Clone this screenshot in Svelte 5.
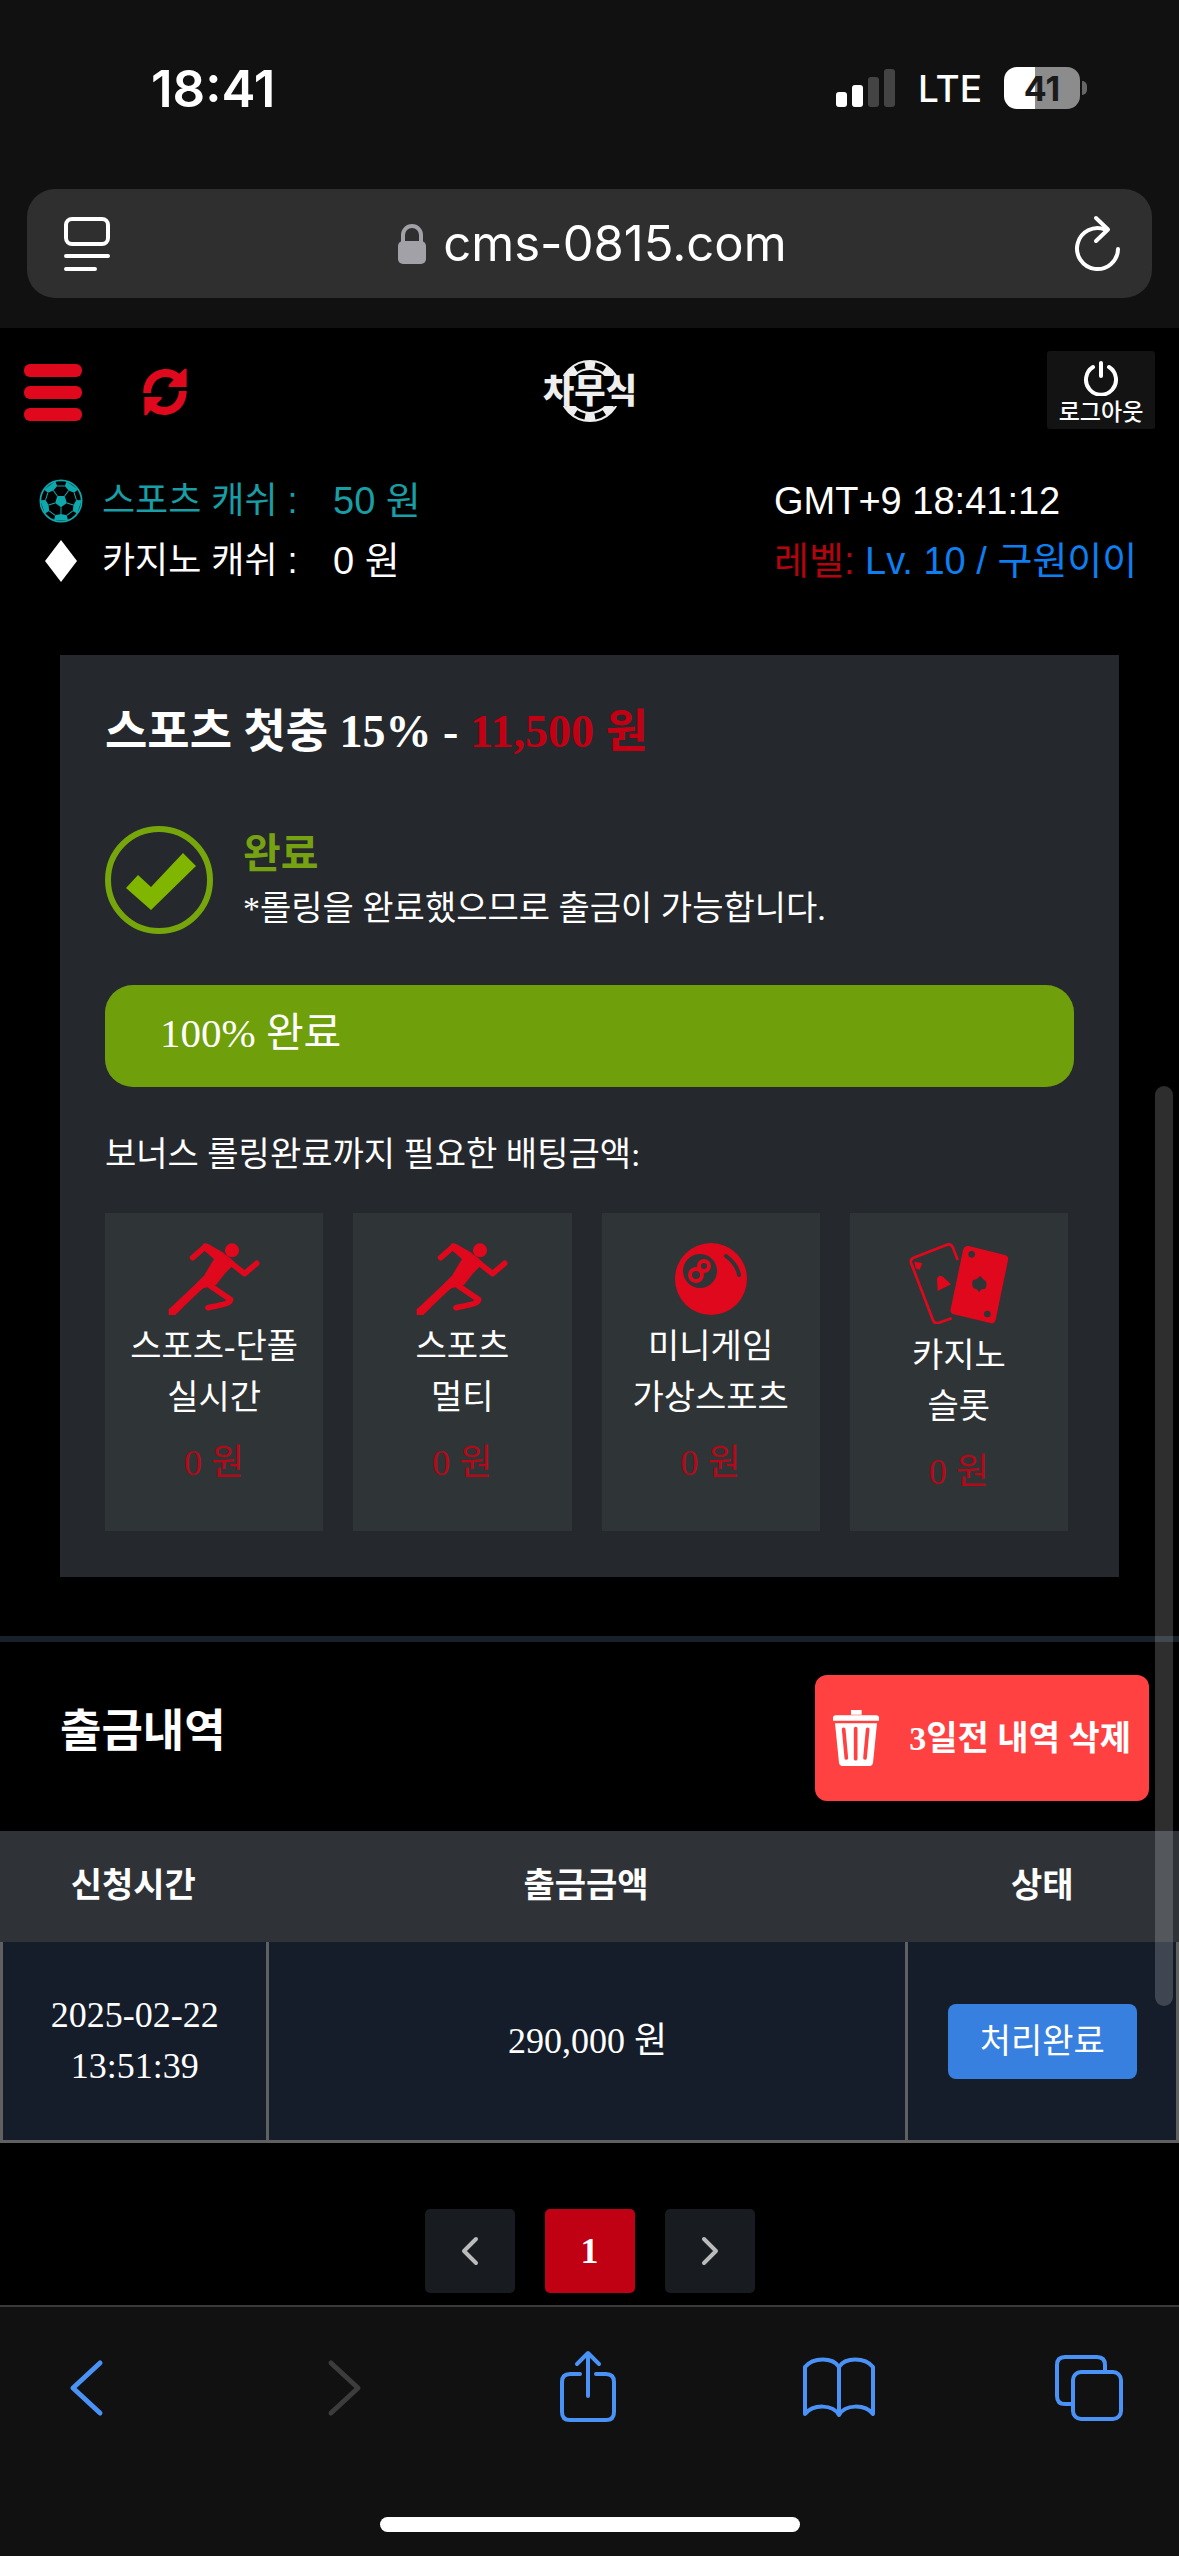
<script>
  const games = [
    { icon: 'runner', lines: ['스포츠-단폴', '실시간'], amount: '0 원' },
    { icon: 'runner', lines: ['스포츠', '멀티'], amount: '0 원' },
    { icon: 'ball', lines: ['미니게임', '가상스포츠'], amount: '0 원' },
    { icon: 'cards', lines: ['카지노', '슬롯'], amount: '0 원' }
  ];
  const withdrawals = [
    { date: '2025-02-22', time: '13:51:39', amount: '290,000 원', state: '처리완료' }
  ];
  const progress = 100;

  // Soccer ball geometry: a point at a radius and angle from the ball's centre.
  const at = (r, deg) => {
    const a = (deg * Math.PI) / 180;
    return `${(64 + r * Math.cos(a)).toFixed(1)} ${(64 + r * Math.sin(a)).toFixed(1)}`;
  };
  const dirs = [-54, 18, 90, 162, 234];
  const centre = 'M' + dirs.map((d) => at(18, d)).join('L') + 'Z';
  const patches = dirs
    .map((d) => `M${at(38, d)}L${at(45, d + 22)}L${at(60, d + 20)}L${at(60, d - 20)}L${at(45, d - 22)}Z`)
    .join('');
  const seams = dirs
    .map((d) => `M${at(18, d)}L${at(38, d)}M${at(45, d + 22)}L${at(45, d + 50)}`)
    .join('');
</script>

<div class="screen">
  <header class="browser-top">
    <div class="status-bar">
      <span class="clock">18:41</span>
      <div class="signals">
        <svg width="60" height="38" viewBox="0 0 60 38" aria-hidden="true">
          <rect x="0" y="23" width="11" height="15" rx="3" fill="#fff" />
          <rect x="16" y="16" width="11" height="22" rx="3" fill="#fff" />
          <rect x="32" y="8" width="11" height="30" rx="3" fill="#444" />
          <rect x="48" y="0" width="11" height="38" rx="3" fill="#444" />
        </svg>
        <span class="network">LTE</span>
        <div class="battery"><span>41</span></div>
      </div>
    </div>
    <div class="address-bar">
      <button class="plain" aria-label="페이지 설정">
        <svg width="48" height="58" viewBox="0 0 48 58" fill="none" stroke="#fff" stroke-width="4" stroke-linecap="round">
          <rect x="3" y="4" width="42" height="25" rx="6" />
          <path d="M3 41H45M3 54H32" />
        </svg>
      </button>
      <button class="plain url">
        <svg width="28" height="40" viewBox="0 0 28 40" aria-hidden="true">
          <path d="M5 18V11a9 9 0 0 1 18 0V18" fill="none" stroke="#a2a1a8" stroke-width="4" />
          <rect x="0" y="17" width="28" height="23" rx="5" fill="#a2a1a8" />
        </svg>
        <span>cms-0815.com</span>
      </button>
      <button class="plain" aria-label="새로고침">
        <svg width="48" height="58" viewBox="0 0 48 58" fill="none" stroke="#fff" stroke-width="4" stroke-linecap="round" stroke-linejoin="round">
          <path d="M44 34A20.500 20.500 0 1 1 31 14.500" />
          <path d="M22 3L34 14.500L22 26" />
        </svg>
      </button>
    </div>
  </header>

  <main>
    <div class="app-bar">
      <div class="left-tools">
        <button class="plain menu" aria-label="메뉴"><i></i><i></i><i></i></button>
        <button class="plain" aria-label="갱신">
          <svg width="46" height="48" viewBox="0 0 138 144" fill="#e0081c">
            <path d="M4 75C4 30 35 3 72 3C88 3 101 8 112 17L128 2H134V57H80V51L95 35C88 29 80 27 71 27C46 27 29 46 27 75Z" />
            <path d="M134 69C134 114 103 141 66 141C50 141 37 136 26 127L14 142H7V87H59V93L43 109C50 115 58 117 67 117C92 117 109 98 111 69Z" />
          </svg>
        </button>
      </div>
      <svg class="logo" width="104" height="66" viewBox="0 0 104 66" role="img" aria-label="차무식">
        <circle cx="52" cy="34" r="30" fill="none" stroke="#eee" stroke-width="2" />
        <circle cx="52" cy="34" r="22" fill="none" stroke="#eee" stroke-width="2" />
        <circle cx="52" cy="34" r="26" fill="none" stroke="#eee" stroke-width="8" pathLength="80" stroke-dasharray="5 5" stroke-dashoffset="2.500" />
        <rect x="0" y="19" width="104" height="30" fill="#000" />
        <text x="52" y="46" text-anchor="middle">차무식</text>
      </svg>
      <button class="logout">
        <svg width="36" height="36" viewBox="0 0 36 36" fill="none" stroke="#fff" stroke-width="4" stroke-linecap="round" aria-hidden="true">
          <path d="M10 7A15 15 0 1 0 26 7" />
          <path d="M18 3V16" />
        </svg>
        <span>로그아웃</span>
      </button>
    </div>

    <section class="account">
      <dl>
        <div class="cash sports">
          <svg width="44" height="44" viewBox="0 0 128 128" aria-hidden="true">
            <circle cx="64" cy="64" r="60" fill="none" stroke="#0fa9ad" stroke-width="5" />
            <path d={centre + patches} fill="#0fa9ad" />
            <path d={seams} stroke="#0fa9ad" stroke-width="3" fill="none" />
          </svg>
          <dt>스포츠 캐쉬 :</dt>
          <dd>50 원</dd>
        </div>
        <div class="cash">
          <svg width="44" height="44" viewBox="0 0 44 44" aria-hidden="true"><path d="M22 1L38 22L22 43L6 22Z" fill="#fff" /></svg>
          <dt>카지노 캐쉬 :</dt>
          <dd>0 원</dd>
        </div>
      </dl>
      <div class="member">
        <p>GMT+9 18:41:12</p>
        <p><span class="level">레벨:</span> <span class="name">Lv. 10 / 구원이이</span></p>
      </div>
    </section>

    <section class="bonus">
      <h2>스포츠 첫충 15% - <em>11,500 원</em></h2>
      <div class="result">
        <svg width="108" height="108" viewBox="0 0 108 108" aria-hidden="true">
          <circle cx="54" cy="54" r="51" fill="none" stroke="#76a60b" stroke-width="6" />
          <path d="M21 62L33 49L46 61L78 27L91 40L46 84Z" fill="#80b600" />
        </svg>
        <div>
          <h3>완료</h3>
          <p>*롤링을 완료했으므로 출금이 가능합니다.</p>
        </div>
      </div>
      <div class="progress" role="progressbar" aria-label="롤링" aria-valuenow={progress} aria-valuemin="0" aria-valuemax="100">
        <div class="fill" style="width: {progress}%">{progress}% 완료</div>
      </div>
      <p class="need">보너스 롤링완료까지 필요한 배팅금액:</p>
      <ul class="games">
        {#each games as game}
          <li>
            {#if game.icon === 'runner'}
              <svg width="92" height="72" viewBox="234 338 276 216" aria-hidden="true">
                <g fill="#e0081c">
                  <circle cx="426" cy="360" r="21" />
                  <path d="M338 341C344 337 350 339 356 342L398 366C408 376 424 384 436 398L406 428L378 464L340 474C326 486 290 520 256 554H236V537C268 508 310 468 342 436L372 386L344 362Z" />
                </g>
                <g fill="none" stroke="#e0081c" stroke-width="17" stroke-linecap="round" stroke-linejoin="round">
                  <path d="M308 382L345 350" />
                  <path d="M420 396L464 430L500 399" />
                  <path d="M360 466L422 508C418 522 390 524 354 532" />
                </g>
              </svg>
            {:else if game.icon === 'ball'}
              <svg width="72" height="72" viewBox="0 0 72 72" aria-hidden="true">
                <circle cx="36" cy="36" r="36" fill="#e0081c" />
                <circle cx="25" cy="28" r="17" fill="#2f3437" />
                <g fill="none" stroke="#e0081c" stroke-width="4">
                  <circle cx="29" cy="23" r="5" />
                  <circle cx="21" cy="32" r="6" />
                </g>
                <path d="M51 13Q62 21 64 32" fill="none" stroke="#2f3437" stroke-width="4" stroke-linecap="round" />
              </svg>
            {:else}
              <svg width="100" height="81" viewBox="26 54 300 243" aria-hidden="true">
                <path d="M172 105L157 66Q150 54 138 60L40 98Q28 103 33 116L98 286Q104 298 116 293L154 280" fill="none" stroke="#e0081c" stroke-width="8" />
                <path d="M42 110L66 114L58 134L46 130Z" fill="#e0081c" />
                <path d="M110 160Q116 148 126 154L152 178L112 198Z" fill="#e0081c" />
                <path d="M205 63L314 90Q326 94 323 106L286 284Q282 298 270 294L160 268Q148 264 151 252L188 76Q192 61 205 63Z" fill="#e0081c" />
                <g fill="#2f3437">
                  <path d="M240 153Q246 162 256 168Q262 180 254 192Q242 190 236 202Q232 192 220 190Q212 178 218 166Q232 162 240 153Z" />
                  <circle cx="214" cy="88" r="10" />
                  <circle cx="261" cy="267" r="10" />
                </g>
              </svg>
            {/if}
            <p>{#each game.lines as line}<span>{line}</span>{/each}</p>
            <strong>{game.amount}</strong>
          </li>
        {/each}
      </ul>
    </section>

    <section class="history">
      <div class="history-head">
        <h2>출금내역</h2>
        <button class="delete">
          <svg width="46" height="56" viewBox="0 0 138 168" aria-hidden="true">
            <path d="M54 0H86V14H54ZM0 24Q0 16 8 16H130Q138 16 138 24V32H0Z" fill="#fff" />
            <path d="M6 40H132L120 158Q118 168 108 168H30Q20 168 18 158Z" fill="#fff" />
            <path d="M32 58L40 144M68 56V146M104 58L96 144" stroke="#ff4142" stroke-width="11" stroke-linecap="round" />
          </svg>
          <span>3일전 내역 삭제</span>
        </button>
      </div>
      <table>
        <thead>
          <tr><th class="when">신청시간</th><th>출금금액</th><th class="state">상태</th></tr>
        </thead>
        <tbody>
          {#each withdrawals as row}
            <tr>
              <td>{row.date}<br />{row.time}</td>
              <td>{row.amount}</td>
              <td><button class="done">{row.state}</button></td>
            </tr>
          {/each}
        </tbody>
      </table>
      <nav class="pages" aria-label="페이지">
        <button aria-label="이전">
          <svg width="18" height="30" viewBox="0 0 18 30"><path d="M15 3L3 15L15 27" /></svg>
        </button>
        <button class="current">1</button>
        <button aria-label="다음">
          <svg width="18" height="30" viewBox="0 0 18 30"><path d="M3 3L15 15L3 27" /></svg>
        </button>
      </nav>
    </section>
  </main>

  <footer>
    <nav class="toolbar" aria-label="브라우저">
      <button class="plain" aria-label="뒤로">
        <svg width="72" height="76" viewBox="0 0 72 76"><path d="M49 13L22 38L49 63" stroke-width="5" /></svg>
      </button>
      <button class="plain off" aria-label="앞으로" disabled>
        <svg width="72" height="76" viewBox="0 0 72 76"><path d="M29 13L56 38L29 63" stroke-width="5" /></svg>
      </button>
      <button class="plain" aria-label="공유">
        <svg width="72" height="76" viewBox="0 0 72 76">
          <path d="M28 24H18Q10 24 10 32V62Q10 70 18 70H54Q62 70 62 62V32Q62 24 54 24H44M36 46V4M25 14L36 3L47 14" />
        </svg>
      </button>
      <button class="plain" aria-label="책갈피">
        <svg width="72" height="76" viewBox="0 0 72 76">
          <path d="M36 17C30 7 10 7 2 17V64C10 54 30 54 36 65C42 54 62 54 70 64V17C62 7 42 7 36 17V65" />
        </svg>
      </button>
      <button class="plain" aria-label="탭">
        <svg width="72" height="76" viewBox="0 0 72 76">
          <path d="M20 54H12Q4 54 4 46V15Q4 7 12 7H44Q52 7 52 15V22" />
          <rect x="20" y="22" width="48" height="47" rx="8" />
        </svg>
      </button>
    </nav>
    <div class="home-line"></div>
  </footer>

  <div class="scroll-thumb"></div>
</div>

<style>
  :global(body) {
    background: #000;
  }
  .screen {
    position: relative;
    display: flex;
    flex-direction: column;
    min-height: 100vh;
    background: #000;
    color: #fff;
    font-family: "Liberation Serif", "Noto Sans CJK KR", serif;
    font-size: 34px;
    line-height: 51px;
  }
  h2, h3, p, dl, dt, dd, ul {
    margin: 0;
    padding: 0;
  }
  svg {
    display: block;
    flex: none;
  }
  button {
    margin: 0;
    padding: 0;
    border: 0;
    color: inherit;
    font: inherit;
  }
  .plain {
    background: none;
  }

  .browser-top {
    padding: 67px 27px 30px;
    background: #111;
    font-family: Inter, sans-serif;
  }
  .status-bar {
    display: flex;
    justify-content: space-between;
    align-items: center;
    height: 42px;
    padding: 0 72px 0 124px;
  }
  .clock {
    font-size: 51px;
    font-weight: 600;
  }
  .signals {
    display: flex;
    align-items: center;
    gap: 22px;
  }
  .network {
    font-size: 37px;
    font-weight: 500;
  }
  .battery {
    position: relative;
    display: flex;
    align-items: center;
    justify-content: center;
    width: 76px;
    height: 42px;
    border-radius: 13px;
    background: linear-gradient(90deg, #fff 41%, #8c8c8c 41%);
    color: #1a1a1a;
    font-size: 34px;
    font-weight: 700;
  }
  .battery::after {
    content: "";
    position: absolute;
    right: -7px;
    top: 14px;
    width: 5px;
    height: 14px;
    border-radius: 0 5px 5px 0;
    background: #666;
  }
  .address-bar {
    display: flex;
    justify-content: space-between;
    align-items: center;
    height: 109px;
    margin-top: 80px;
    padding: 0 30px 0 36px;
    border-radius: 28px;
    background: #2f2f2f;
  }
  .url {
    display: flex;
    align-items: center;
    gap: 17px;
    font-size: 49px;
  }

  main {
    flex: 1;
  }
  .app-bar {
    display: grid;
    grid-template-columns: 1fr auto 1fr;
    align-items: center;
    padding: 23px 24px 0;
  }
  .left-tools {
    display: flex;
    align-items: center;
    gap: 60px;
    padding-top: 4px;
  }
  .menu {
    display: grid;
    gap: 9px;
    width: 58px;
  }
  .menu i {
    height: 13px;
    border-radius: 6px;
    background: #e0081c;
  }
  .logo text {
    fill: #eee;
    font-family: "Noto Sans CJK KR", sans-serif;
    font-size: 34px;
    font-weight: 900;
  }
  .logout {
    display: flex;
    flex-direction: column;
    align-items: center;
    justify-self: end;
    gap: 2px;
    width: 108px;
    height: 78px;
    padding-top: 9px;
    border-radius: 3px;
    background: #131313;
    font-family: "Noto Sans CJK KR", sans-serif;
    font-size: 23px;
    font-weight: 500;
    line-height: 24px;
  }

  .account {
    display: flex;
    justify-content: space-between;
    padding: 42px 45px 0 39px;
    font-family: "Liberation Sans", "Noto Sans CJK KR", sans-serif;
    font-size: 38px;
    line-height: 60px;
  }
  .cash {
    display: flex;
    align-items: center;
  }
  .cash dt {
    width: 211px;
    margin-left: 19px;
    margin-right: 20px;
    font-size: 36px;
  }
  .sports {
    color: #179fa5;
  }
  .member {
    width: 360px;
    white-space: nowrap;
  }
  .level {
    color: #b3040f;
  }
  .name {
    color: #0d7ff0;
  }

  .bonus {
    margin: 64px 60px 0;
    padding: 47px 45px 46px;
    background: #25282c;
  }
  .bonus h2 {
    font-size: 46px;
    line-height: 60px;
  }
  .bonus em {
    color: #c30013;
    font-style: normal;
  }
  .result {
    display: flex;
    align-items: center;
    gap: 30px;
    margin-top: 64px;
  }
  .bonus h3 {
    color: #75a112;
    font-size: 41px;
    line-height: 57px;
  }
  .progress {
    margin-top: 51px;
    border-radius: 28px;
    background: #3a3f44;
  }
  .fill {
    box-sizing: border-box;
    padding: 0 55px 6px;
    border-radius: 28px;
    background: #6f9f0a;
    font-size: 41px;
    line-height: 96px;
  }
  .need {
    margin-top: 42px;
  }
  .games {
    display: grid;
    grid-template-columns: repeat(4, 1fr);
    gap: 30px;
    margin: 33px 6px 0 0;
    list-style: none;
  }
  .games li {
    display: flex;
    flex-direction: column;
    align-items: center;
    padding: 30px 0 33px;
    background: #2f3437;
  }
  .games p {
    margin-top: 6px;
    text-align: center;
  }
  .games span {
    display: block;
  }
  .games strong {
    margin-top: 15px;
    color: #b20a18;
    font-size: 36px;
    font-weight: 400;
  }

  .history {
    margin-top: 59px;
    border-top: 6px solid #18202a;
  }
  .history-head {
    display: flex;
    justify-content: space-between;
    align-items: center;
    padding: 33px 30px 30px 60px;
  }
  .history-head h2 {
    padding-bottom: 12px;
    font-size: 45px;
    line-height: 60px;
  }
  .delete {
    display: flex;
    align-items: center;
    gap: 30px;
    height: 126px;
    padding: 0 18px;
    border-radius: 12px;
    background: #ff4142;
    font-weight: 700;
  }
  table {
    width: 100%;
    border-spacing: 0;
    table-layout: fixed;
    text-align: center;
  }
  th {
    height: 108px;
    padding: 0 0 3px;
    background: #2f3338;
  }
  .when {
    width: 22.6%;
  }
  .state {
    width: 23.2%;
  }
  td {
    height: 198px;
    padding: 0;
    border: solid #606060;
    border-width: 0 0 3px 3px;
    background: #151d2b;
    font-size: 36px;
  }
  td:last-child {
    border-right-width: 3px;
  }
  .done {
    height: 75px;
    padding: 0 32px;
    border-radius: 8px;
    background: #3880e0;
    font-size: 34px;
  }
  .pages {
    display: flex;
    justify-content: center;
    gap: 30px;
    margin-top: 66px;
    padding-bottom: 12px;
  }
  .pages button {
    display: flex;
    align-items: center;
    justify-content: center;
    width: 90px;
    height: 84px;
    border-radius: 5px;
    background: #181b20;
    font-size: 36px;
    font-weight: 700;
  }
  .pages .current {
    background: #c00013;
  }
  .pages path {
    fill: none;
    stroke: #bbb;
    stroke-width: 4;
    stroke-linecap: round;
    stroke-linejoin: round;
  }

  footer {
    border-top: 2px solid #3a3a3a;
    background: #111;
  }
  .toolbar {
    display: flex;
    justify-content: space-between;
    padding: 43px 54px 0 51px;
  }
  .toolbar svg {
    fill: none;
    stroke: #4a92f5;
    stroke-width: 4;
    stroke-linecap: round;
    stroke-linejoin: round;
  }
  .toolbar .off svg {
    stroke: #3c3c3c;
  }
  .home-line {
    width: 420px;
    height: 15px;
    margin: 91px auto 24px;
    border-radius: 8px;
    background: #fff;
  }
  .scroll-thumb {
    position: absolute;
    top: 1086px;
    right: 6px;
    width: 18px;
    height: 920px;
    border-radius: 9px;
    background: rgba(255, 255, 255, 0.18);
  }
</style>
